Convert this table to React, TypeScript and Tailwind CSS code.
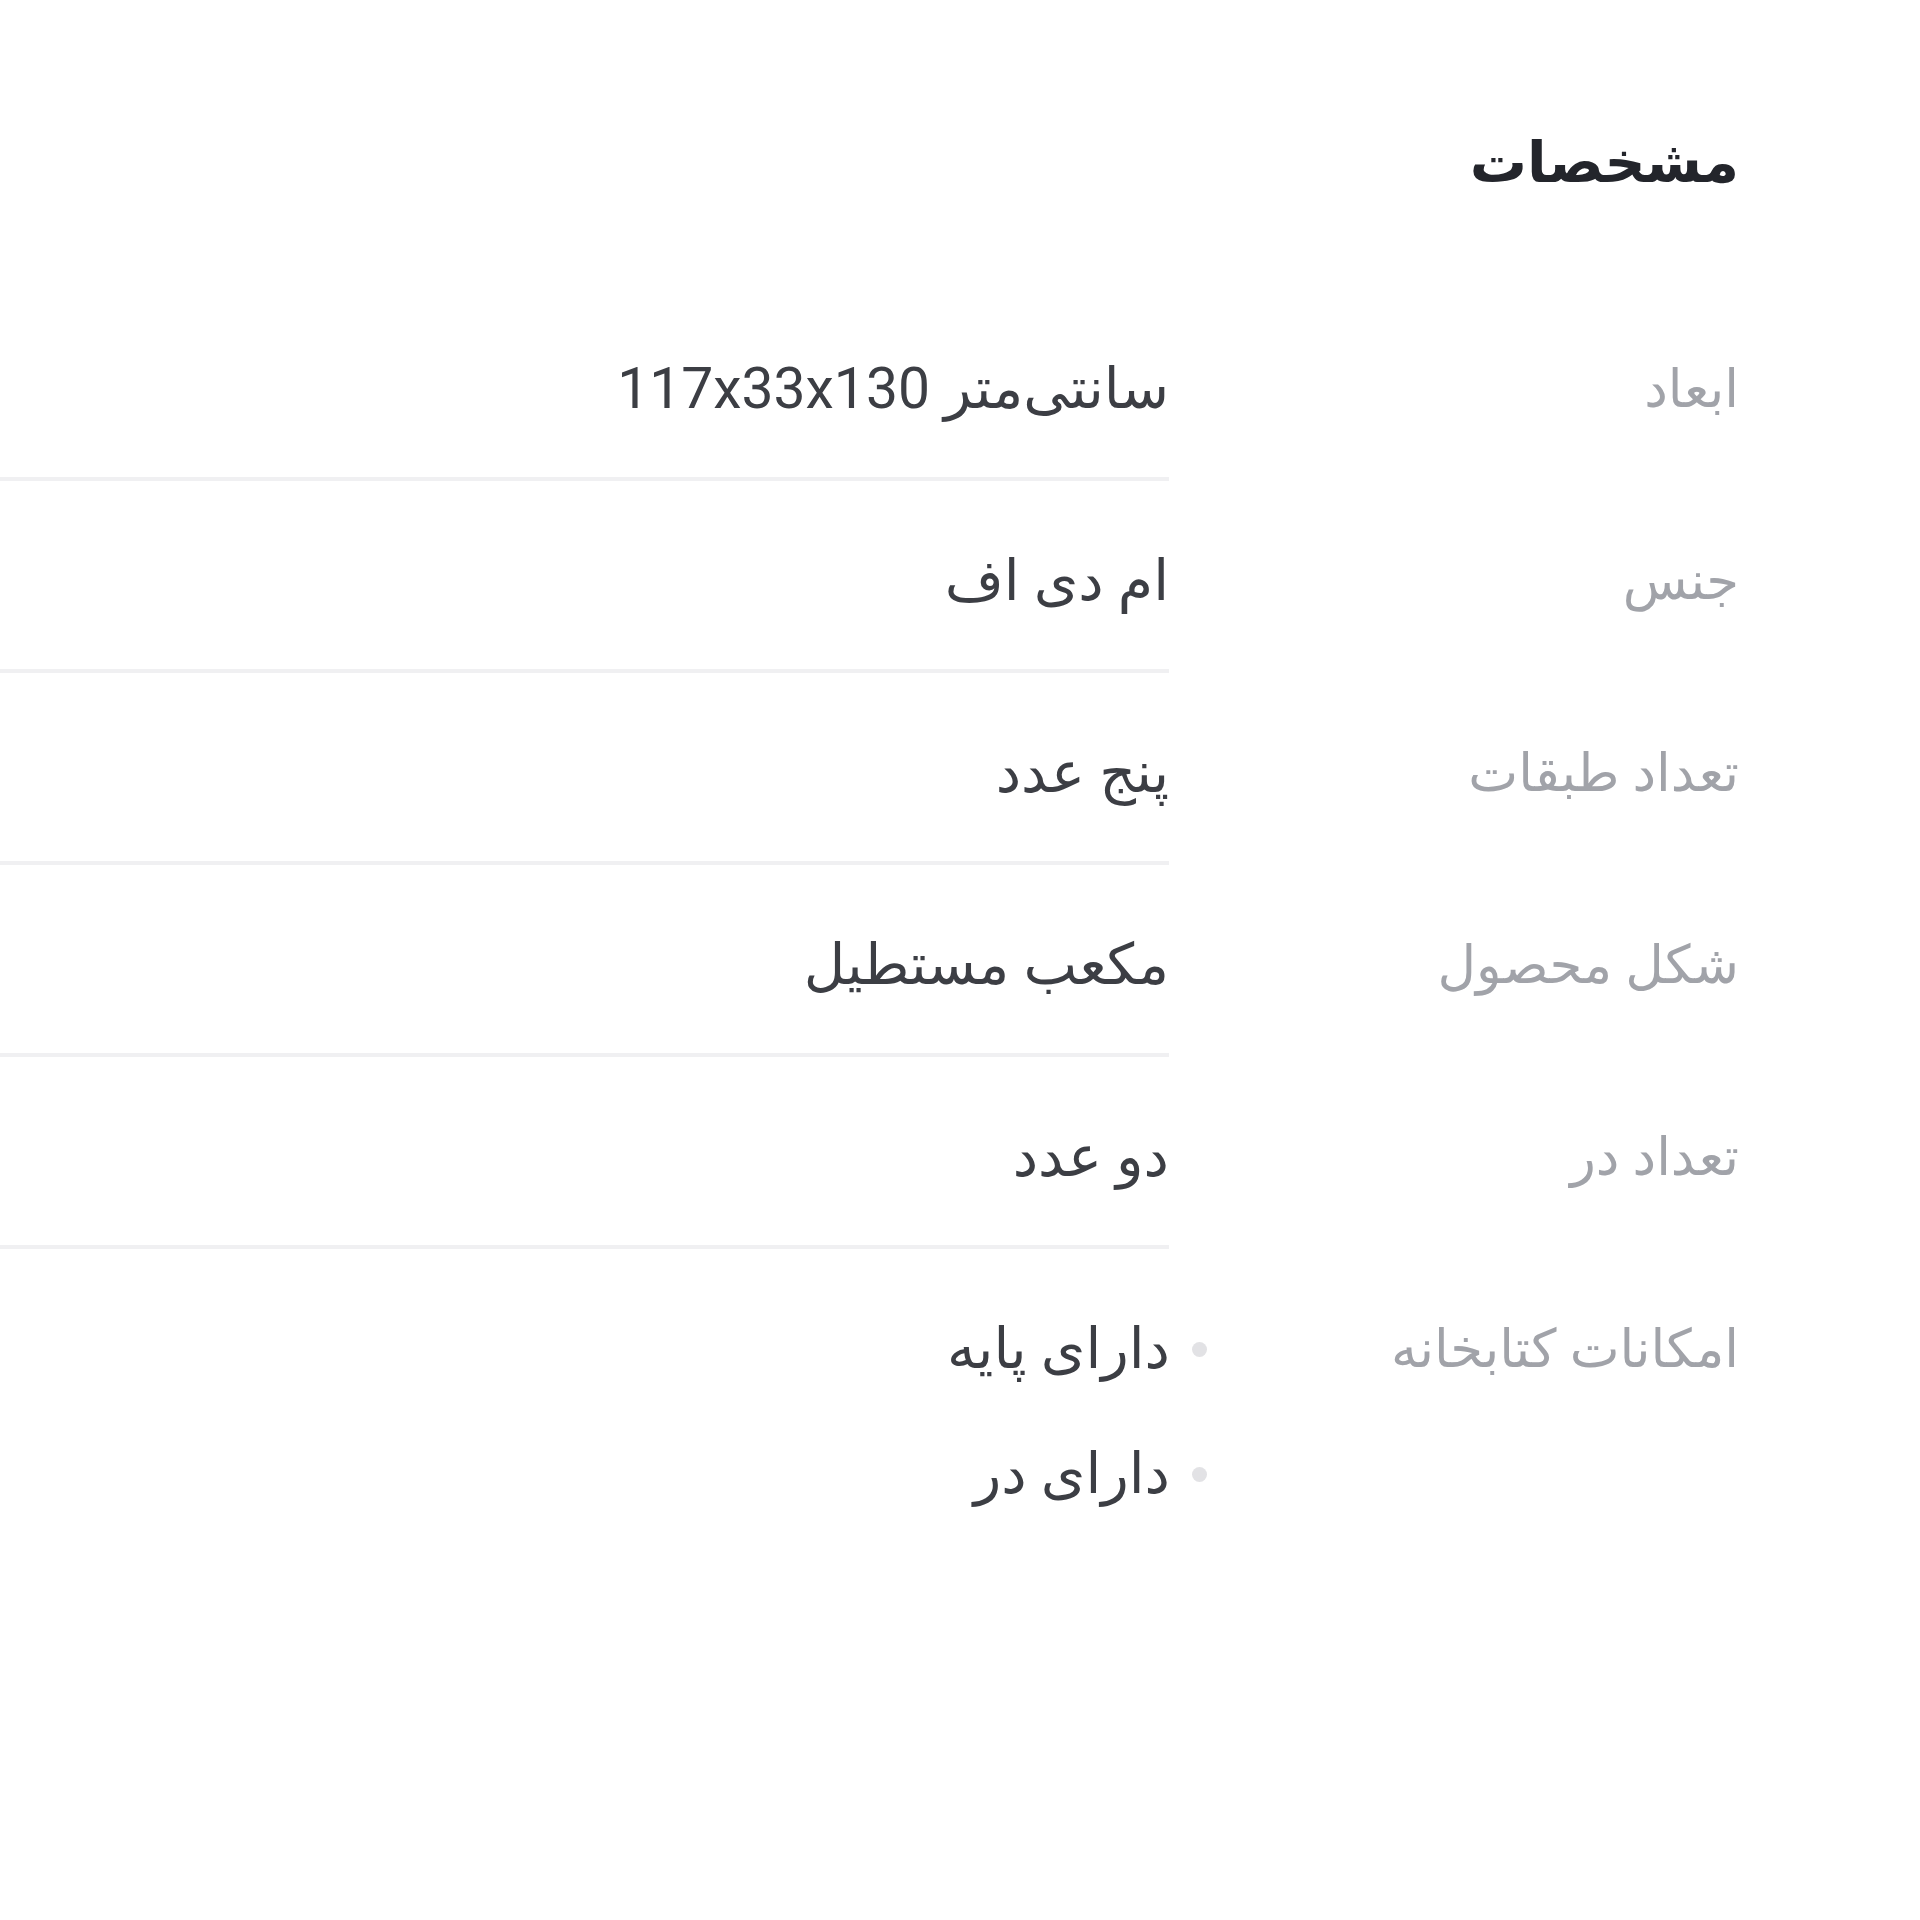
const specs = [
  { label: "ابعاد", value: "سانتی‌متر 117x33x130" },
  { label: "جنس", value: "ام دی اف" },
  { label: "تعداد طبقات", value: "پنج عدد" },
  { label: "شکل محصول", value: "مکعب مستطیل" },
  { label: "تعداد در", value: "دو عدد" },
];

const features = ["دارای پایه", "دارای در"];

export default function App() {
  return (
    <div
      dir="rtl"
      className="min-h-screen w-full bg-white pr-[181px] pt-[128px] font-['Roboto','DejaVu_Sans',sans-serif]"
    >
      {/* Title */}
      <h2 className="text-[57px] font-bold leading-[70px] text-[#23252b]">مشخصات</h2>

      {/* Spec rows */}
      <div className="mt-[91px]">
        {specs.map((s) => (
          <div key={s.label} className="flex">
            <div className="w-[570px] shrink-0 pt-[60px] text-[53px] leading-[80px] text-[#a1a3a9]">
              {s.label}
            </div>
            <div className="flex-1 border-b-4 border-[#f0f0f2] pt-[60px] pb-[48px] text-[57px] leading-[80px] text-[#3c3e44]">
              {s.value}
            </div>
          </div>
        ))}

        {/* Feature list */}
        <div className="flex">
          <div className="w-[570px] shrink-0 pt-[60px] text-[53px] leading-[80px] text-[#a1a3a9]">
            امکانات کتابخانه
          </div>
          <ul className="flex flex-1 flex-col gap-[45px] pt-[60px] text-[57px] leading-[80px] text-[#3c3e44]">
            {features.map((f) => (
              <li key={f} className="mr-[-38px] flex items-center gap-[22px]">
                <span className="h-[15px] w-[15px] shrink-0 rounded-full bg-[#e2e2e5]" />
                <span>{f}</span>
              </li>
            ))}
          </ul>
        </div>
      </div>
    </div>
  );
}
